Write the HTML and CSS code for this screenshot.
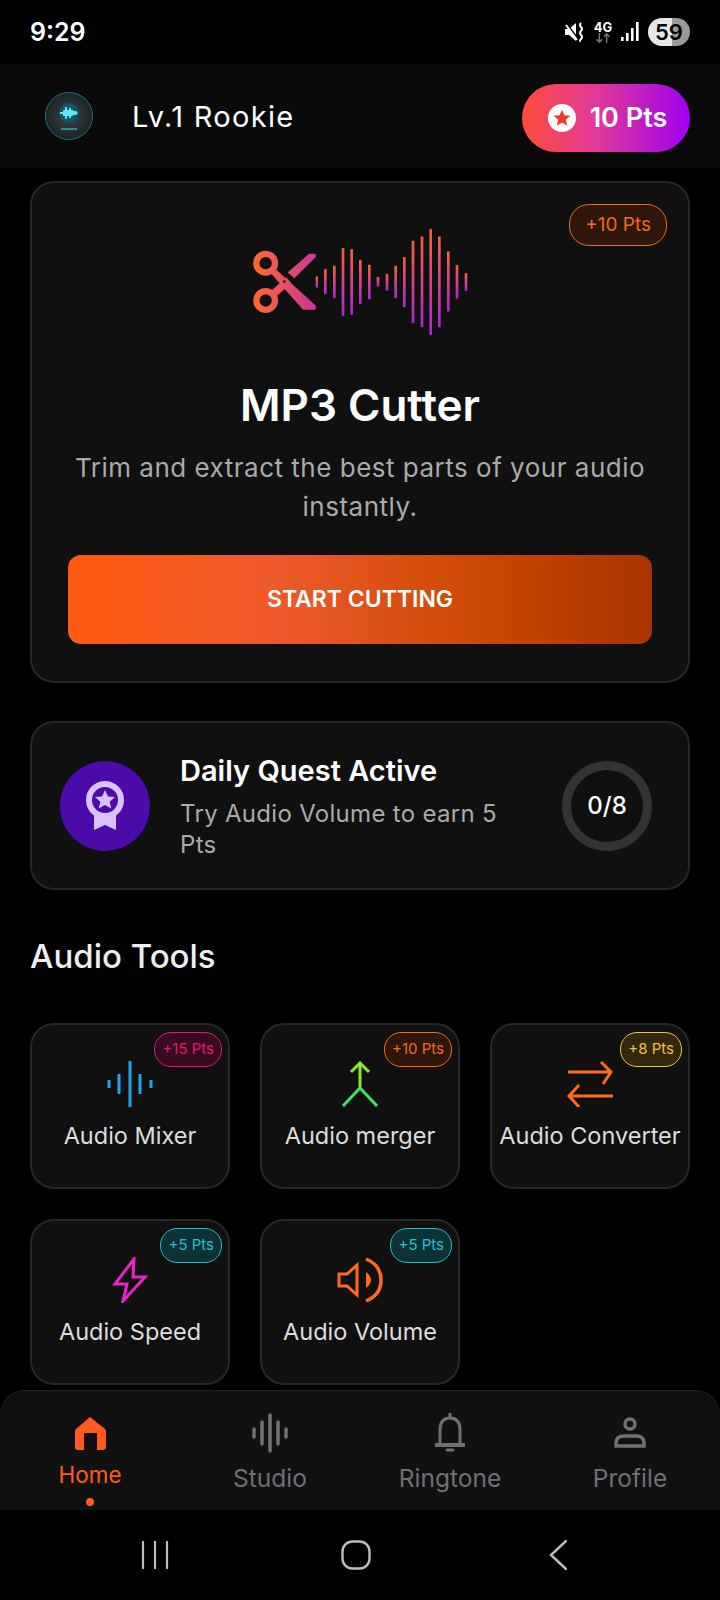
FILE: index.html
```html
<!DOCTYPE html>
<html lang="en">

<head>
    <meta charset="UTF-8">
    <meta name="viewport" content="width=device-width, initial-scale=1.0">
    <title>MP3 Cutter</title>
    <link rel="stylesheet" href="styles.css">
</head>

<body>
    <!-- status bar -->
    <div class="status">
        <span class="time">9:29</span>
        <div class="status-icons">
            <svg width="20" height="20" viewBox="0 0 20 20">
                <path d="M0 7h4l7-6v18l-7-6H0z" fill="#fff" />
                <path d="M1 1l12 16" stroke="#000" stroke-width="2" />
                <path d="M1 3l11 15" stroke="#fff" stroke-width="2" />
                <path d="M16 1q-2 2 0 4t0 4 0 4 0 4 0 2" fill="none" stroke="#fff" stroke-width="2" />
            </svg>
            <div class="net">
                <span>4G</span>
                <svg width="16" height="10" viewBox="0 0 16 11">
                    <path d="M4 0v10M1 7l3 3 3-3" fill="none" stroke="#777" stroke-width="1.6" />
                    <path d="M12 11V1M9 4l3-3 3 3" fill="none" stroke="#777" stroke-width="1.6" />
                </svg>
            </div>
            <svg width="18" height="20" viewBox="0 0 18 20">
                <rect x="0" y="15" width="2.6" height="4" fill="#fff" />
                <rect x="5" y="11" width="2.6" height="8" fill="#fff" />
                <rect x="10" y="6" width="2.6" height="13" fill="#fff" />
                <rect x="15" y="0" width="2.6" height="19" fill="#fff" />
            </svg>
            <span class="battery">59</span>
        </div>
    </div>

    <!-- top bar -->
    <div class="topbar">
        <div class="avatar">
            <svg width="48" height="48" viewBox="0 0 48 48">
                <defs>
                    <radialGradient id="glow">
                        <stop offset="0" stop-color="#3a4447" />
                        <stop offset="1" stop-color="#1b2325" />
                    </radialGradient>
                </defs>
                <circle cx="24" cy="24" r="23.5" fill="url(#glow)" stroke="#1f6f78" />
                <circle cx="24" cy="21" r="10" fill="#17555f" />
                <path d="M15 20h3v-2h2v-3h2v3h2v-2h2v2h2v1h3l2 2-2 2h-3v1h-2v2h-2v-2h-2v3h-2v-3h-2v-2h-3z" fill="#5fe6f5" />
                <path d="M16 37h16" stroke="#2fb4c4" stroke-width="1.4" />
            </svg>
        </div>
        <span class="rank">Lv.1 Rookie</span>
        <div class="points">
            <span class="points-star">
                <svg width="18" height="18" viewBox="0 0 24 24">
                    <path d="M12 1l3.200 7.400 8 .7-6.100 5.200 1.900 7.900L12 18l-7 4.200 1.900-7.900L.8 9.100l8-.7z" fill="#f0392b" />
                </svg>
            </span>
            10 Pts
        </div>
    </div>

    <div class="main">
        <!-- hero card -->
        <div class="card hero">
            <span class="badge badge-orange hero-badge">+10 Pts</span>
            <svg class="hero-art" width="215" height="106" viewBox="100 118 645 317">
                <defs>
                    <linearGradient id="bar" x1="0" y1="0" x2="0" y2="1">
                        <stop offset="0" stop-color="#f9603a" />
                        <stop offset="1" stop-color="#a826d6" />
                    </linearGradient>
                    <linearGradient id="blade" gradientUnits="userSpaceOnUse" x1="100" y1="270" x2="290" y2="270">
                        <stop offset="0" stop-color="#ff6a2a" />
                        <stop offset="1" stop-color="#c8369c" />
                    </linearGradient>
                </defs>
                <circle cx="138" cy="220" r="28" fill="none" stroke="url(#blade)" stroke-width="19" />
                <circle cx="138" cy="332" r="28" fill="none" stroke="url(#blade)" stroke-width="19" />
                <path d="M155 252L170 240 288 347V360H250z" fill="url(#blade)" />
                <path d="M158 300L200 262 215 280 172 318z" fill="url(#blade)" />
                <path d="M204 248L268 192H288V202L224 265z" fill="url(#blade)" />
                <circle cx="194" cy="275" r="4" fill="#111" />
                <g fill="url(#bar)">
                    <rect x="288" y="260" width="7" height="33" />
                    <rect x="313" y="238" width="8" height="75" />
                    <rect x="340" y="228" width="8" height="97" />
                    <rect x="366" y="175" width="8" height="203" />
                    <rect x="392" y="178" width="8" height="197" />
                    <rect x="418" y="210" width="8" height="132" />
                    <rect x="445" y="225" width="8" height="103" />
                    <rect x="471" y="262" width="8" height="28" />
                    <rect x="498" y="252" width="8" height="50" />
                    <rect x="524" y="228" width="8" height="97" />
                    <rect x="550" y="202" width="8" height="150" />
                    <rect x="576" y="153" width="8" height="247" />
                    <rect x="603" y="140" width="8" height="272" />
                    <rect x="629" y="118" width="8" height="317" />
                    <rect x="655" y="140" width="8" height="272" />
                    <rect x="682" y="185" width="8" height="180" />
                    <rect x="708" y="226" width="8" height="100" />
                    <rect x="735" y="250" width="8" height="53" />
                </g>
            </svg>
            <h1 class="hero-title">MP3 Cutter</h1>
            <p class="hero-desc">Trim and extract the best parts of your audio instantly.</p>
            <div class="hero-btn">START CUTTING</div>
        </div>

        <!-- daily quest -->
        <div class="card quest">
            <div class="quest-icon">
                <svg width="44" height="52" viewBox="0 0 44 52">
                    <path d="M11 32v18l11-5 11 5V32z" fill="#d9c2ff" />
                    <circle cx="22" cy="20" r="16" fill="#4a0ba8" stroke="#d9c2ff" stroke-width="6" />
                    <path d="M22 10l3 6.500 7 .6-5.300 4.600 1.600 6.900L22 24.900l-6.300 3.700 1.600-6.900L12 17.100l7-.6z" fill="#d9c2ff" />
                </svg>
            </div>
            <div class="quest-text">
                <div class="quest-title">Daily Quest Active</div>
                <div class="quest-sub">Try Audio Volume to earn 5 Pts</div>
            </div>
            <div class="quest-ring">0/8</div>
        </div>

        <h2 class="section-title">Audio Tools</h2>

        <div class="tools">
            <div class="card tool">
                <span class="badge badge-pink">+15 Pts</span>
                <svg width="46" height="46" viewBox="0 0 46 46" fill="none" stroke="#1fa5e8" stroke-width="3">
                    <path d="M2 19v8M12 13v20M23 0v46M33 13v20M44 19v8" />
                </svg>
                <span class="tool-name">Audio Mixer</span>
            </div>
            <div class="card tool">
                <span class="badge badge-orange">+10 Pts</span>
                <svg width="46" height="46" viewBox="0 0 46 46" fill="none" stroke-width="3">
                    <path d="M23 2v27M14 11l9-9 9 9" stroke="#86ee20" />
                    <path d="M6 45l17-18 17 18" stroke="#40e060" />
                </svg>
                <span class="tool-name">Audio merger</span>
            </div>
            <div class="card tool">
                <span class="badge badge-yellow">+8 Pts</span>
                <svg width="46" height="46" viewBox="0 0 46 46" fill="none" stroke="#ff6a1a" stroke-width="3">
                    <path d="M1 11h43M34 1l10 10-8 12M46 35H3M12 24L2 35l10 11" />
                </svg>
                <span class="tool-name">Audio Converter</span>
            </div>
            <div class="card tool">
                <span class="badge badge-cyan">+5 Pts</span>
                <svg width="46" height="46" viewBox="0 0 46 46" fill="none" stroke="#e626c8" stroke-width="3" stroke-linejoin="miter">
                    <path d="M27 2L8 27h12l-4 17 22-24H26z" />
                </svg>
                <span class="tool-name">Audio Speed</span>
            </div>
            <div class="card tool">
                <span class="badge badge-cyan">+5 Pts</span>
                <svg width="46" height="46" viewBox="0 0 46 46" fill="none" stroke="#ff6a1a" stroke-width="3">
                    <path d="M2 17h8l10-9v30l-10-9H2z" />
                    <path d="M29 15q10 8 0 16z" fill="#ff6a1a" stroke="none" />
                    <path d="M29 2q15 6 15 21t-15 21" stroke-width="3.500" />
                </svg>
                <span class="tool-name">Audio Volume</span>
            </div>
        </div>
    </div>

    <!-- bottom nav -->
    <div class="nav">
        <div class="nav-item active">
            <svg width="32" height="34" viewBox="0 0 32 34">
                <path d="M16 1L31 13q1 1 1 3v15q0 3-3 3h-6V17H10v17H4q-3 0-3-3V16q0-2 1-3z" fill="#ff5a1f" />
            </svg>
            <span>Home</span>
            <i class="nav-dot"></i>
        </div>
        <div class="nav-item">
            <svg width="36" height="40" viewBox="0 0 36 40" fill="none" stroke="#6f6f75" stroke-width="3.500" stroke-linecap="round">
                <path d="M2 16v8M10 9v22M18 2v36M26 9v22M34 16v8" />
            </svg>
            <span>Studio</span>
        </div>
        <div class="nav-item">
            <svg width="32" height="40" viewBox="0 0 32 40" fill="none" stroke="#6f6f75" stroke-width="3">
                <path d="M6 32V17Q6 5 16 5t10 12v15" />
                <path d="M1 32h30" stroke-width="4" />
                <path d="M13 37h6M16 1v3" stroke-width="3" stroke-linecap="round" />
            </svg>
            <span>Ringtone</span>
        </div>
        <div class="nav-item">
            <svg width="32" height="40" viewBox="0 0 32 40" fill="none" stroke="#6f6f75" stroke-width="3.500">
                <circle cx="16" cy="11" r="5" />
                <path d="M2 33v-3q0-7 8-7h12q8 0 8 7v3z" />
            </svg>
            <span>Profile</span>
        </div>
    </div>

    <!-- android nav -->
    <div class="sysnav">
        <svg width="28" height="28" viewBox="0 0 28 28" fill="none" stroke="#bdbdbd" stroke-width="2.200" stroke-linecap="round">
            <path d="M2 1v26M14 1v26M26 1v26" />
        </svg>
        <svg width="30" height="30" viewBox="0 0 30 30" fill="none" stroke="#bdbdbd" stroke-width="2.400">
            <rect x="1.500" y="1.500" width="27" height="27" rx="10" />
        </svg>
        <svg class="sys-back" width="18" height="30" viewBox="0 0 18 30" fill="none" stroke="#bdbdbd" stroke-width="2.400" stroke-linecap="round">
            <path d="M17 1L2 15l15 14" />
        </svg>
    </div>
</body>

</html>
```

FILE: styles.css
```css
* {
    box-sizing: border-box;
}

body {
    margin: 0;
    width: 720px;
    height: 1600px;
    background: #000;
    color: #fff;
    font-family: "Inter", "Noto Sans", sans-serif;
    display: flex;
    flex-direction: column;
    overflow: hidden;
}

/* status bar */
.status {
    height: 64px;
    padding: 0 30px;
    display: flex;
    align-items: center;
    justify-content: space-between;
}

.time {
    font-size: 25px;
    font-weight: 600;
}

.status-icons {
    display: flex;
    align-items: center;
    gap: 10px;
}

.net {
    display: flex;
    flex-direction: column;
    align-items: center;
    width: 16px;
}

.net span {
    font-size: 13px;
    font-weight: 700;
    line-height: 12px;
}

.battery {
    width: 42px;
    height: 28px;
    margin-left: -1px;
    border-radius: 14px;
    background: linear-gradient(90deg, #e8e8e8 58%, #999 58%);
    color: #000;
    font-size: 22px;
    font-weight: 600;
    line-height: 28px;
    text-align: center;
}

/* top bar */
.topbar {
    height: 104px;
    padding: 0 30px 0 45px;
    background: #0a0a0a;
    display: flex;
    align-items: center;
}

.avatar {
    width: 48px;
    height: 48px;
}

.rank {
    margin-left: 39px;
    font-size: 29px;
    letter-spacing: 1.300px;
    line-height: 36px;
    padding-top: 1px;
    flex: 1;
}

.points {
    width: 168px;
    height: 68px;
    margin-top: 3px;
    padding-left: 3px;
    border-radius: 34px;
    background: linear-gradient(90deg, #ff4d3a 0%, #e0389a 45%, #a000f0 100%);
    display: flex;
    align-items: center;
    justify-content: center;
    gap: 14px;
    font-size: 27px;
    font-weight: 600;
}

.points-star {
    width: 28px;
    height: 28px;
    border-radius: 50%;
    background: #fff;
    display: flex;
    align-items: center;
    justify-content: center;
}

/* main */
.main {
    flex: 1;
    padding: 13px 30px 0;
}

.card {
    position: relative;
    background: #101010;
    border: 2px solid #272727;
    border-radius: 24px;
}

.hero {
    height: 502px;
    padding: 46px 37px 0;
    display: flex;
    flex-direction: column;
    align-items: center;
}

.hero-title {
    margin: 41px 0 0;
    font-size: 44px;
    font-weight: 600;
    line-height: 58px;
}

.hero-desc {
    margin: 14px 0 0;
    color: #aaa;
    font-size: 26px;
    letter-spacing: .5px;
    line-height: 39px;
    text-align: center;
}

.hero-btn {
    width: 584px;
    height: 89px;
    margin-top: 29px;
    border-radius: 13px;
    background: linear-gradient(90deg, #ff5a10 0%, #ef5a2c 35%, #c94800 72%, #a83400 100%);
    font-size: 23px;
    font-weight: 600;
    line-height: 89px;
    text-align: center;
}

.badge {
    position: absolute;
    top: 7px;
    right: 6px;
    height: 35px;
    padding: 0 7px;
    border: 1.500px solid;
    border-radius: 17px;
    font-size: 15px;
    line-height: 32px;
}

.hero-badge {
    top: 21px;
    right: 21px;
    height: 42px;
    padding: 0 15px;
    border-radius: 20px;
    font-size: 19px;
    line-height: 39px;
}

.badge-pink {
    color: #e0186c;
    border-color: #e0186c;
    background: #3a0a22;
}

.badge-orange {
    color: #f06a20;
    border-color: #f06a20;
    background: #2e1608;
}

.badge-yellow {
    color: #f5c04a;
    border-color: #f5c04a;
    background: #332808;
}

.badge-cyan {
    color: #2ac0d0;
    border-color: #2ab8c8;
    background: #0c3238;
}

/* quest */
.quest {
    height: 169px;
    margin-top: 38px;
    padding: 0 36px 0 28px;
    display: flex;
    align-items: center;
}

.quest-icon {
    width: 90px;
    height: 90px;
    border-radius: 50%;
    background: #4a0ba8;
    display: flex;
    align-items: center;
    justify-content: center;
    flex-shrink: 0;
}

.quest-text {
    width: 345px;
    margin-left: 30px;
}

.quest-title {
    font-size: 29px;
    font-weight: 600;
    line-height: 38px;
}

.quest-sub {
    margin-top: 8px;
    color: #aaa;
    font-size: 24px;
    letter-spacing: .3px;
    line-height: 31px;
}

.quest-ring {
    width: 90px;
    height: 90px;
    margin-left: auto;
    border: 9px solid #333;
    border-radius: 50%;
    font-size: 24px;
    font-weight: 500;
    line-height: 72px;
    text-align: center;
}

.section-title {
    margin: 43px 0 0;
    color: #eee;
    font-size: 33px;
    font-weight: 500;
    line-height: 46px;
}

/* tools */
.tools {
    margin-top: 44px;
    display: grid;
    grid-template-columns: repeat(3, 200px);
    grid-auto-rows: 166px;
    gap: 30px;
}

.tool {
    padding-top: 36px;
    display: flex;
    flex-direction: column;
    align-items: center;
}

.tool-name {
    margin-top: 14px;
    color: #ddd;
    font-size: 23.500px;
    line-height: 30px;
    white-space: nowrap;
}

/* bottom nav */
.nav {
    height: 120px;
    background: #111;
    border-top: 1px solid #222;
    border-radius: 24px 24px 0 0;
    display: grid;
    grid-template-columns: repeat(4, 180px);
}

.nav-item {
    position: relative;
    display: flex;
    flex-direction: column;
    align-items: center;
    height: 120px;
    color: #6f6f75;
    font-size: 24.500px;
    line-height: 30px;
}

.nav-item svg {
    margin-top: 22px;
    height: 40px;
}

.nav-item span {
    margin-top: 10px;
}

.nav-item.active {
    color: #ff5a1f;
    font-size: 22.500px;
}

.nav-item.active span {
    margin-top: 7px;
}

.nav-dot {
    position: absolute;
    bottom: 5px;
    width: 8px;
    height: 8px;
    border-radius: 50%;
    background: #ff5a1f;
}

/* android nav */
.sysnav {
    height: 90px;
    padding-left: 141px;
    display: flex;
    align-items: center;
    gap: 172px;
}

.sys-back {
    margin-left: 6px;
}
```
